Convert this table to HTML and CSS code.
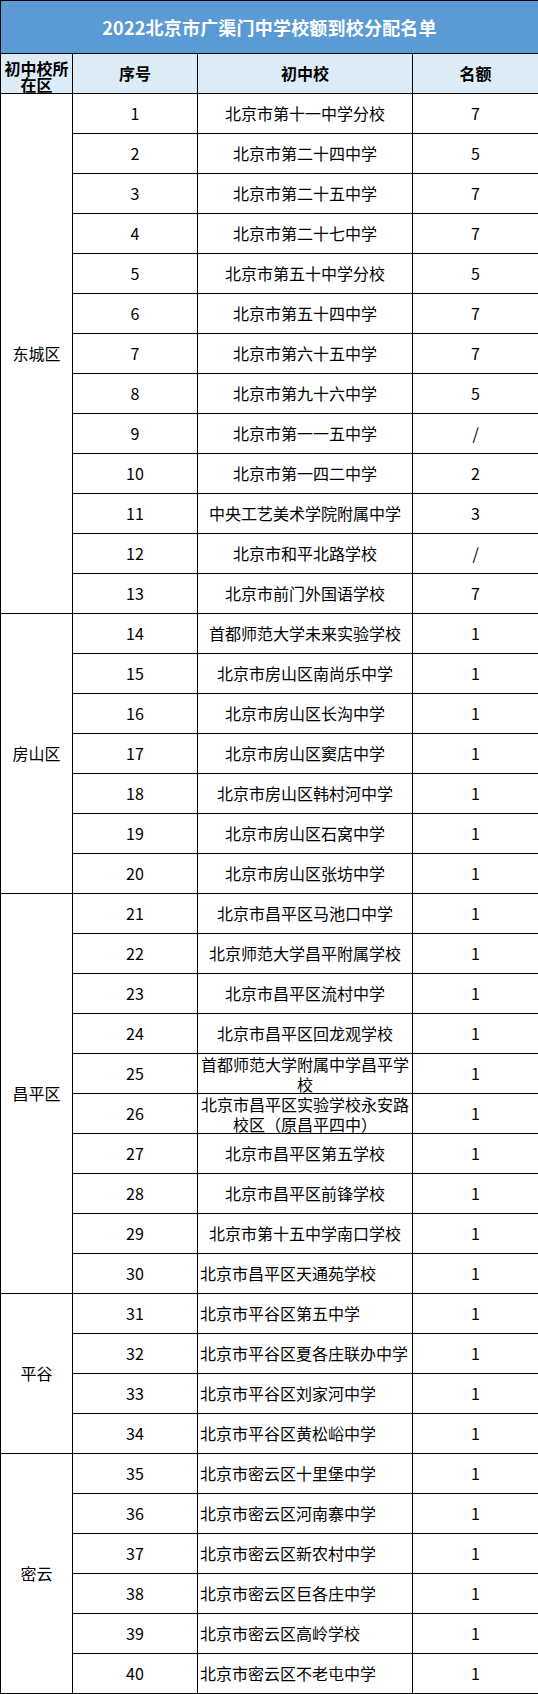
FILE: index.html
```html
<!DOCTYPE html>
<html lang="zh-CN">
<head>
<meta charset="utf-8">
<title>2022北京市广渠门中学校额到校分配名单</title>
<link rel="stylesheet" href="styles.css">
</head>
<body>
<table class="sheet">
  <colgroup>
    <col class="c-dist"><col class="c-no"><col class="c-school"><col class="c-quota">
  </colgroup>
  <thead>
    <tr class="title-row"><th colspan="4" class="title">2022北京市广渠门中学校额到校分配名单</th></tr>
    <tr class="head-row">
      <th class="head"><div class="two">初中校所<br>在区</div></th>
      <th class="head">序号</th>
      <th class="head">初中校</th>
      <th class="head">名额</th>
    </tr>
  </thead>
  <tbody>
    <tr><td class="dist" rowspan="13">东城区</td><td>1</td><td>北京市第十一中学分校</td><td>7</td></tr>
    <tr><td>2</td><td>北京市第二十四中学</td><td>5</td></tr>
    <tr><td>3</td><td>北京市第二十五中学</td><td>7</td></tr>
    <tr><td>4</td><td>北京市第二十七中学</td><td>7</td></tr>
    <tr><td>5</td><td>北京市第五十中学分校</td><td>5</td></tr>
    <tr><td>6</td><td>北京市第五十四中学</td><td>7</td></tr>
    <tr><td>7</td><td>北京市第六十五中学</td><td>7</td></tr>
    <tr><td>8</td><td>北京市第九十六中学</td><td>5</td></tr>
    <tr><td>9</td><td>北京市第一一五中学</td><td>/</td></tr>
    <tr><td>10</td><td>北京市第一四二中学</td><td>2</td></tr>
    <tr><td>11</td><td>中央工艺美术学院附属中学</td><td>3</td></tr>
    <tr><td>12</td><td>北京市和平北路学校</td><td>/</td></tr>
    <tr><td>13</td><td>北京市前门外国语学校</td><td>7</td></tr>

    <tr><td class="dist" rowspan="7">房山区</td><td>14</td><td>首都师范大学未来实验学校</td><td>1</td></tr>
    <tr><td>15</td><td>北京市房山区南尚乐中学</td><td>1</td></tr>
    <tr><td>16</td><td>北京市房山区长沟中学</td><td>1</td></tr>
    <tr><td>17</td><td>北京市房山区窦店中学</td><td>1</td></tr>
    <tr><td>18</td><td>北京市房山区韩村河中学</td><td>1</td></tr>
    <tr><td>19</td><td>北京市房山区石窝中学</td><td>1</td></tr>
    <tr><td>20</td><td>北京市房山区张坊中学</td><td>1</td></tr>

    <tr><td class="dist" rowspan="10">昌平区</td><td>21</td><td>北京市昌平区马池口中学</td><td>1</td></tr>
    <tr><td>22</td><td>北京师范大学昌平附属学校</td><td>1</td></tr>
    <tr><td>23</td><td>北京市昌平区流村中学</td><td>1</td></tr>
    <tr><td>24</td><td>北京市昌平区回龙观学校</td><td>1</td></tr>
    <tr><td>25</td><td><div class="wrap">首都师范大学附属中学昌平学<br>校</div></td><td>1</td></tr>
    <tr><td>26</td><td><div class="wrap">北京市昌平区实验学校永安路<br>校区（原昌平四中）</div></td><td>1</td></tr>
    <tr><td>27</td><td>北京市昌平区第五学校</td><td>1</td></tr>
    <tr><td>28</td><td>北京市昌平区前锋学校</td><td>1</td></tr>
    <tr><td>29</td><td>北京市第十五中学南口学校</td><td>1</td></tr>
    <tr><td>30</td><td class="left">北京市昌平区天通苑学校</td><td>1</td></tr>

    <tr><td class="dist" rowspan="4">平谷</td><td>31</td><td class="left">北京市平谷区第五中学</td><td>1</td></tr>
    <tr><td>32</td><td class="left">北京市平谷区夏各庄联办中学</td><td>1</td></tr>
    <tr><td>33</td><td class="left">北京市平谷区刘家河中学</td><td>1</td></tr>
    <tr><td>34</td><td class="left">北京市平谷区黄松峪中学</td><td>1</td></tr>

    <tr><td class="dist" rowspan="6">密云</td><td>35</td><td class="left">北京市密云区十里堡中学</td><td>1</td></tr>
    <tr><td>36</td><td class="left">北京市密云区河南寨中学</td><td>1</td></tr>
    <tr><td>37</td><td class="left">北京市密云区新农村中学</td><td>1</td></tr>
    <tr><td>38</td><td class="left">北京市密云区巨各庄中学</td><td>1</td></tr>
    <tr><td>39</td><td class="left">北京市密云区高岭学校</td><td>1</td></tr>
    <tr><td>40</td><td class="left">北京市密云区不老屯中学</td><td>1</td></tr>
  </tbody>
</table>
</body>
</html>
```
FILE: styles.css
```css
html, body {
  margin: 0;
  padding: 0;
  background: #ffffff;
}

.sheet {
  width: 538px;
  border-collapse: collapse;
  table-layout: fixed;
  font-family: "Noto Sans CJK SC", "Noto Sans", sans-serif;
  font-size: 16px;
  color: #000000;
}

.c-dist { width: 72px; }
.c-no { width: 125px; }
.c-school { width: 215px; }
.c-quota { width: 126px; }

.sheet th,
.sheet td {
  border: 1px solid #000000;
  padding: 0 2px;
  text-align: center;
  vertical-align: middle;
  line-height: 19px;
  white-space: nowrap;
}

.title-row { height: 53px; }

.title {
  background: #5b9bd5;
  color: #ffffff;
  font-size: 18px;
  font-weight: 700;
  padding-top: 5px;
  letter-spacing: 0.2px;
}

.head-row { height: 40px; }

.head {
  background: #ddebf7;
  font-weight: 700;
}

.two {
  line-height: 16px;
  margin: 2px 0 -2px;
}

.sheet tbody tr { height: 40px; }

.sheet td.left { text-align: left; padding-left: 2px; }

.wrap {
  line-height: 20px;
  margin: -1px 0;
}

.sheet td.dist { text-align: center; }
```
